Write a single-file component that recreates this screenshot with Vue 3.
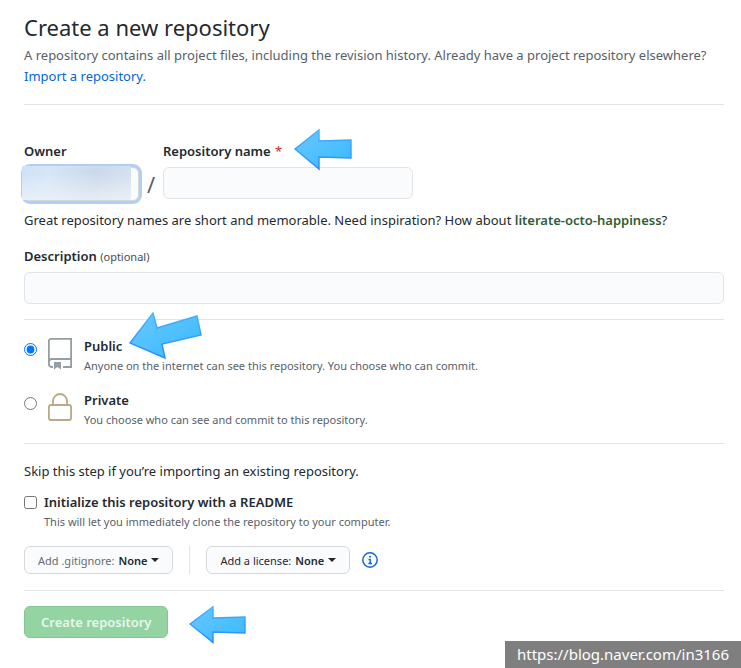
<script setup>
import { ref } from 'vue'

const name = ref('')
const description = ref('')
const visibility = ref('public')
const readme = ref(false)
</script>

<template>
  <main class="page">
    <header class="intro">
      <h1>Create a new repository</h1>
      <p>
        A repository contains all project files, including the revision history. Already have a project repository elsewhere?
        <a class="import" href="#import">Import a repository.</a>
      </p>
    </header>

    <form @submit.prevent>
      <section class="naming">
        <div class="name-row">
          <div class="field">
            <label for="owner">Owner</label>
            <button id="owner" class="owner" type="button"><span class="owner-name"></span></button>
          </div>
          <span class="slash">/</span>
          <div class="field repo">
            <label for="repo">Repository name <span class="star">*</span></label>
            <input id="repo" v-model="name" class="text" type="text" />
            <svg class="arrow arrow-name" viewBox="0 0 58 41" aria-hidden="true">
              <defs>
                <linearGradient id="sky" x1="0" y1="0" x2="0" y2="1">
                  <stop offset="0" stop-color="#45b4ff" />
                  <stop offset="1" stop-color="#2389ff" />
                </linearGradient>
                <linearGradient id="fill" x1="0" y1="0" x2="1" y2="1">
                  <stop offset="0" stop-color="#68c8ff" />
                  <stop offset="1" stop-color="#38b9ff" />
                </linearGradient>
              </defs>
              <path d="M1 20 25 1V12L57 11V29L25 28V40Z" fill="url(#fill)" stroke="url(#sky)" stroke-width="1.4" />
            </svg>
          </div>
        </div>
        <p class="hint">
          Great repository names are short and memorable. Need inspiration? How about <strong>literate-octo-happiness</strong>?
        </p>
        <div class="field">
          <label for="description">Description <small>(optional)</small></label>
          <input id="description" v-model="description" class="text" type="text" />
        </div>
      </section>

      <section class="visibility">
        <div class="option">
          <input id="public" v-model="visibility" type="radio" name="visibility" value="public" />
          <svg class="kind" viewBox="0 0 24 32" aria-hidden="true">
            <path d="M5 30H3.500Q0.900 30 0.900 27V4Q0.900 1.900 3.500 1.900H23.100V30H15M0.900 26Q0.900 22 4 22H23" fill="none" stroke="#959da5" stroke-width="1.800" />
            <path d="M6 25H13V32.500L9.500 30 6 32.500Z" fill="#959da5" />
          </svg>
          <div>
            <label for="public">Public</label>
            <p>Anyone on the internet can see this repository. You choose who can commit.</p>
          </div>
          <svg class="arrow arrow-public" viewBox="0 0 74 48" aria-hidden="true">
            <path d="M1 31 24 1 28 16 68 4 72 23 33 32 36 46Z" fill="url(#fill)" stroke="url(#sky)" stroke-width="1.4" />
          </svg>
        </div>
        <div class="option">
          <input id="private" v-model="visibility" type="radio" name="visibility" value="private" />
          <svg class="kind" viewBox="0 0 24 32" aria-hidden="true">
            <path d="M5 14V10a7 7 0 0 1 14 0V14" fill="none" stroke="#b9a985" stroke-width="1.800" />
            <rect x="0.900" y="14" width="22.200" height="15" rx="2" fill="none" stroke="#b9a985" stroke-width="1.800" />
          </svg>
          <div>
            <label for="private">Private</label>
            <p>You choose who can see and commit to this repository.</p>
          </div>
        </div>
      </section>

      <section class="setup">
        <p class="skip">Skip this step if you’re importing an existing repository.</p>
        <div class="readme">
          <input id="readme" v-model="readme" type="checkbox" />
          <div>
            <label for="readme">Initialize this repository with a README</label>
            <p>This will let you immediately clone the repository to your computer.</p>
          </div>
        </div>
        <div class="menus">
          <button class="menu muted" type="button"><span>Add .gitignore:</span> <b>None</b><i class="caret"></i></button>
          <span class="divider"></span>
          <button class="menu" type="button"><span>Add a license:</span> <b>None</b><i class="caret"></i></button>
          <a class="info" href="#licenses" aria-label="About licenses">
            <svg viewBox="0 0 16 16" aria-hidden="true">
              <circle cx="8" cy="8" r="7.200" fill="none" stroke="#1269d8" stroke-width="1.500" />
              <circle cx="8" cy="4.800" r="1" fill="#1269d8" />
              <path d="M6.500 7.500H8.200V11.300M6.300 11.400H10" fill="none" stroke="#1269d8" stroke-width="1.500" />
            </svg>
          </a>
        </div>
      </section>

      <div class="actions">
        <button class="create" type="submit" disabled>Create repository</button>
        <svg class="arrow-create" viewBox="0 0 57 38" aria-hidden="true">
          <path d="M1 18 24 0.800V12L56 11V27L24 26V36.500Z" fill="url(#fill)" stroke="url(#sky)" stroke-width="1.4" />
        </svg>
      </div>
    </form>

    <div class="watermark">https://blog.naver.com/in3166</div>
  </main>
</template>

<style>
body {
  margin: 0;
  background: #fff;
}
</style>

<style scoped>
.page {
  position: relative;
  box-sizing: border-box;
  min-height: 100vh;
  padding: 10px 17px 16px 24px;
  font-family: "Noto Sans", "Open Sans", sans-serif;
  font-size: 13px;
  line-height: 21px;
  color: #24292e;
}
h1,
p {
  margin: 0;
}
h1 {
  font-size: 22px;
  font-weight: 400;
  line-height: 35px;
}
button,
input {
  font-family: inherit;
  margin: 0;
}
label {
  font-weight: 600;
}
.intro {
  padding-bottom: 17px;
  border-bottom: 1px solid #e1e4e8;
  color: #586069;
}
.intro h1 {
  color: #24292e;
}
.import {
  display: block;
  width: max-content;
  color: #0366d6;
  text-decoration: none;
}
.naming {
  padding: 36px 0 15px;
}
.name-row {
  display: flex;
}
.field {
  display: flex;
  flex-direction: column;
  gap: 5px;
}
.repo {
  position: relative;
  width: 250px;
}
.star {
  color: #cb2431;
  font-weight: 400;
  margin-left: 1px;
}
.text {
  box-sizing: border-box;
  width: 100%;
  height: 32px;
  padding: 0 12px;
  border: 1px solid #e1e4e8;
  border-radius: 6px;
  background: #fafbfc;
  font-size: 13px;
  outline: none;
}
.owner {
  box-sizing: border-box;
  width: 115px;
  height: 34px;
  margin-bottom: -2px;
  padding: 0;
  border: 1px solid #d5d8da;
  border-radius: 6px;
  background: #fafbfc;
  box-shadow: 0 0 0 3px #b0cff1;
}
.owner-name {
  display: block;
  width: 109px;
  height: 34px;
  margin: -3px 0 0 -3px;
  background:
    linear-gradient(to bottom, transparent 20%, #f3f6f9aa 100%),
    linear-gradient(100deg, #cfe2f8 0%, #d6e6f6 25%, #cbd9eb 65%, #d6e1f0 100%);
}
.slash {
  width: 24px;
  padding-top: 33px;
  text-align: center;
  font-size: 22px;
  color: #586069;
}
.hint {
  padding: 11px 0 15px;
}
.hint strong {
  font-weight: 600;
  color: #2f5c37;
}
small {
  font-size: 11px;
  font-weight: 400;
  color: #444d56;
}
.visibility {
  display: flex;
  flex-direction: column;
  gap: 15px;
  padding: 16px 0 14px;
  border-top: 1px solid #e1e4e8;
  border-bottom: 1px solid #e1e4e8;
}
.option {
  position: relative;
  display: flex;
}
.option input {
  width: 13px;
  height: 13px;
  margin: 7px 11px 0 0;
}
.kind {
  overflow: visible;
  width: 24px;
  height: 32px;
  margin: 1px 12px 0 0;
}
.option p,
.readme p {
  font-size: 11px;
  line-height: 18px;
  color: #586069;
}
.arrow {
  position: absolute;
  overflow: visible;
}
.arrow-name {
  left: 131px;
  top: -12px;
  width: 58px;
  height: 41px;
}
.arrow-public {
  left: 105px;
  top: -24px;
  width: 74px;
  height: 48px;
}
.setup {
  padding: 17px 0 16px;
  border-bottom: 1px solid #e1e4e8;
}
.readme {
  display: flex;
  padding: 10px 0 15px;
}
.readme input {
  width: 13px;
  height: 13px;
  margin: 4px 7px 0 0;
}
.menus {
  display: flex;
  align-items: center;
}
.menu {
  display: flex;
  align-items: center;
  gap: 4px;
  height: 28px;
  padding: 0 13px;
  border: 1px solid #d5d8da;
  border-radius: 6px;
  background: #fafbfc;
  font-size: 11px;
  color: #24292e;
  white-space: nowrap;
}
.menu b {
  font-weight: 600;
}
.muted span {
  color: #666c72;
}
.caret {
  border: 4px solid transparent;
  border-top-color: #24292e;
  border-bottom: 0;
}
.divider {
  width: 1px;
  height: 28px;
  margin: 0 16px;
  background: #e1e4e8;
}
.info {
  display: flex;
  margin-left: 12px;
}
.info svg {
  width: 16px;
  height: 16px;
}
.actions {
  display: flex;
  align-items: flex-start;
  gap: 21px;
  padding-top: 15px;
}
.create {
  height: 32px;
  padding: 0 16px;
  border: 1px solid #86c696;
  border-radius: 6px;
  background: #94d3a2;
  font-size: 13px;
  font-weight: 600;
  color: #e9f6ec;
}
.arrow-create {
  width: 57px;
  height: 38px;
}
.watermark {
  position: absolute;
  right: 0;
  bottom: 0;
  padding: 0 12px;
  background: #7f7f7f;
  color: #fff;
  font-size: 15px;
  line-height: 27px;
}
</style>
